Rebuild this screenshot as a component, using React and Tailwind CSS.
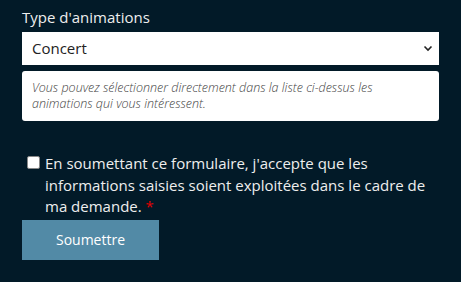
export default function App() {
  return (
    <div className="min-h-screen w-full bg-[#021a28] px-[22px] pt-[6px] text-[15px]" style={{ fontFamily: '"Open Sans", sans-serif' }}>
      <label className="block text-[15px] leading-[22px] text-[#eeeeee]">Type d'animations</label>
      <div className="relative mt-[4px] h-[33px] w-[417px] bg-white">
        <div className="flex h-full items-center pl-[10px] text-[15px] text-[#222222]">Concert</div>
        <svg className="absolute right-[6px] top-[13px]" width="10" height="7" viewBox="0 0 10 7" fill="none">
          <path d="M1.5 1.5 L5 5 L8.5 1.5" stroke="#222" strokeWidth="1.6" />
        </svg>
      </div>
      <div className="mt-[6px] w-[417px] rounded-[3px] bg-white px-[10px] pt-[9px] pb-[9px] text-[12.5px] font-light italic leading-[16px] text-[#444444]">
        Vous pouvez sélectionner directement dans la liste ci-dessus les animations qui vous intéressent.
      </div>
      <div className="mt-[32px] flex items-start gap-[5px]">
        <span className="mt-[3px] ml-[5px] block h-[13px] w-[13px] shrink-0 rounded-[2px] border border-[#888] bg-white" />
        <p className="w-[400px] text-[15px] leading-[21.5px] text-[#eeeeee]">
          En soumettant ce formulaire, j'accepte que les informations saisies soient exploitées dans le cadre de ma demande. <span className="text-[#e00000]">*</span>
        </p>
      </div>
      <button className="mt-[2px] h-[40px] w-[137px] bg-[#528aa6] text-[14px] text-white">Soumettre</button>
    </div>
  );
}
